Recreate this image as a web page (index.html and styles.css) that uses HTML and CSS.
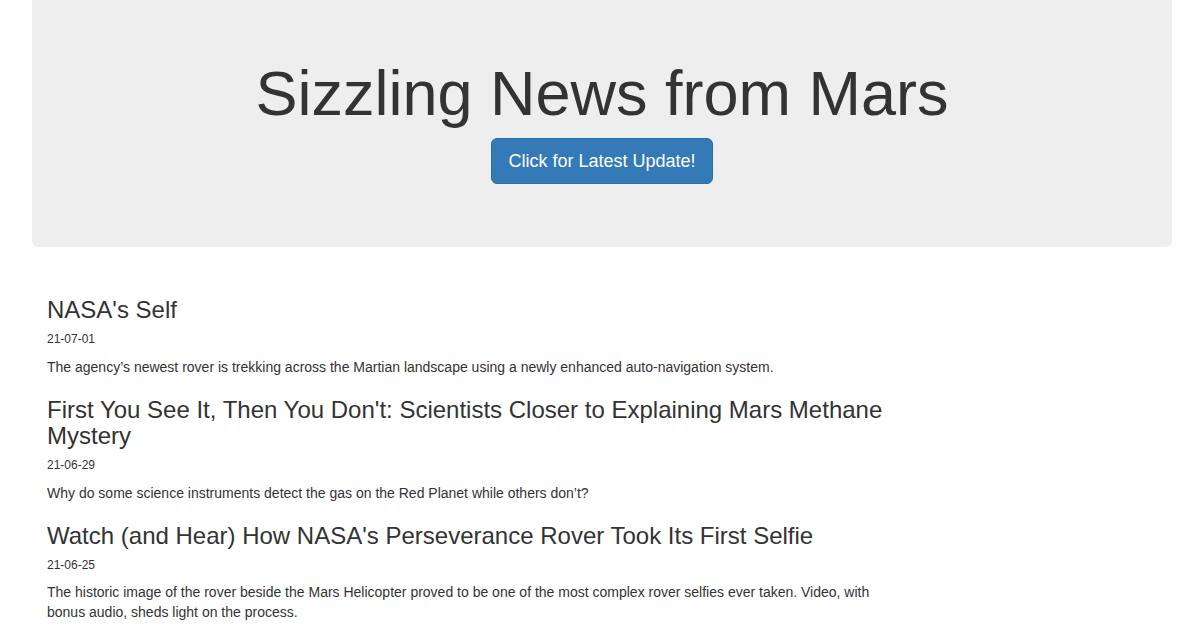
FILE: index.html
```html
<!DOCTYPE html>
<html lang="en">
<head>
<meta charset="utf-8">
<title>Sizzling News from Mars</title>
<link rel="stylesheet" href="styles.css">
</head>
<body>
<header class="jumbotron">
  <h1 class="title">Sizzling News from Mars</h1>
  <div class="actions">
    <button class="btn-primary" type="button">Click for Latest Update!</button>
  </div>
</header>
<main class="news">
  <article class="item">
    <h3 class="item-title">NASA's Self</h3>
    <h6 class="item-date">21-07-01</h6>
    <p class="item-text">The agency’s newest rover is trekking across the Martian landscape using a newly enhanced auto-navigation system.</p>
  </article>
  <article class="item">
    <h3 class="item-title">First You See It, Then You Don't: Scientists Closer to Explaining Mars Methane Mystery</h3>
    <h6 class="item-date">21-06-29</h6>
    <p class="item-text">Why do some science instruments detect the gas on the Red Planet while others don’t?</p>
  </article>
  <article class="item">
    <h3 class="item-title">Watch (and Hear) How NASA's Perseverance Rover Took Its First Selfie</h3>
    <h6 class="item-date">21-06-25</h6>
    <p class="item-text">The historic image of the rover beside the Mars Helicopter proved to be one of the most complex rover selfies ever taken. Video, with bonus audio, sheds light on the process.</p>
  </article>
</main>
</body>
</html>
```

FILE: styles.css
```css
html, body {
  margin: 0;
  padding: 0;
  background: #fff;
}
body {
  font-family: "Liberation Sans", Arial, Helvetica, sans-serif;
  font-size: 14px;
  line-height: 20px;
  color: #333;
}
.jumbotron {
  margin: 0 24px 30px 32px;
  padding: 59px 60px 63px;
  background: #eeeeee;
  border-radius: 0 0 6px 6px;
  text-align: center;
}
.title {
  margin: 0 0 10px;
  font-size: 63px;
  line-height: 69px;
  font-weight: 500;
  color: #333;
}
.actions {
  display: flex;
  justify-content: center;
}
.btn-primary {
  font-family: inherit;
  font-size: 18px;
  line-height: 24px;
  padding: 10px 16px;
  color: #fff;
  background: #337ab7;
  border: 1px solid #2e6da4;
  border-radius: 6px;
  cursor: pointer;
}
.news {
  display: flow-root;
  padding: 0 47px;
}
.item {
  width: 850px;
}
.item-title {
  margin: 20px 0 10px;
  font-size: 24px;
  line-height: 1.1;
  font-weight: 500;
}
.item-date {
  margin: 10px 0;
  font-size: 12px;
  line-height: 1.1;
  font-weight: 500;
}
.item-text {
  margin: 0 0 10px;
}
```
